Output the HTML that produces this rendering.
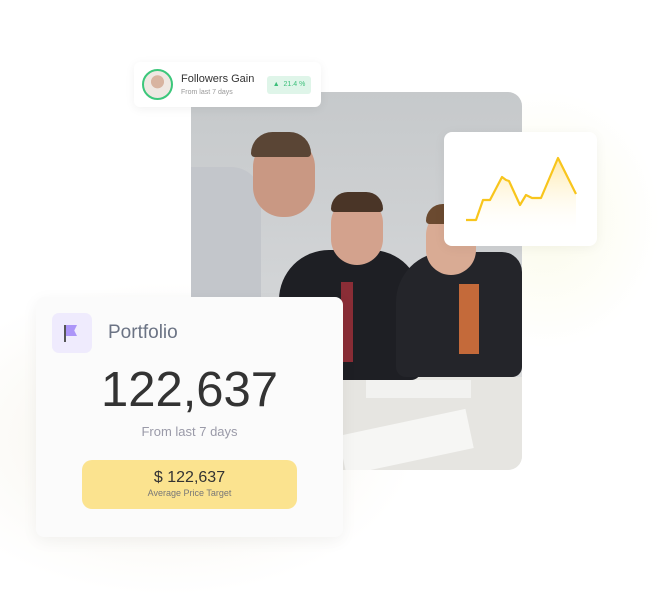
<!DOCTYPE html>
<html><head><style>
body{margin:0;width:661px;height:597px;background:#fff;position:relative;overflow:hidden;font-family:"Liberation Sans",sans-serif}
.abs{position:absolute}
</style></head><body>
<div class="abs" style="left:0;top:280px;width:420px;height:317px;background:radial-gradient(ellipse at 40% 50%,#f6f3ea 0%,#fff 70%)"></div>
<div class="abs" style="left:430px;top:90px;width:231px;height:260px;background:radial-gradient(ellipse at 50% 50%,#fbfbea 0%,#fff 70%)"></div>
<!-- photo -->
<div class="abs" style="left:191px;top:92px;width:331px;height:378px;border-radius:14px;overflow:hidden;background:linear-gradient(#c6c9cb,#d4d6d8 60%,#e4e4e2)">
 <div class="abs" style="left:0;top:285px;width:331px;height:93px;background:#e6e5e1"></div>
 <div class="abs" style="left:0;top:75px;width:70px;height:210px;background:#c3c6cb;border-radius:0 30px 0 0"></div>
 <div class="abs" style="left:62px;top:45px;width:62px;height:80px;border-radius:30px;background:#c99883"></div>
 <div class="abs" style="left:60px;top:40px;width:60px;height:25px;border-radius:30px 30px 5px 5px;background:#5a4535"></div>
 <div class="abs" style="left:88px;top:158px;width:142px;height:130px;border-radius:50px 50px 10px 10px;background:#1e1f24"></div>
 <div class="abs" style="left:140px;top:105px;width:52px;height:68px;border-radius:26px;background:#d3a28d"></div>
 <div class="abs" style="left:140px;top:100px;width:52px;height:20px;border-radius:26px 26px 5px 5px;background:#4a3527"></div>
 <div class="abs" style="left:205px;top:160px;width:126px;height:125px;border-radius:50px 20px 10px 10px;background:#24252a"></div>
 <div class="abs" style="left:235px;top:118px;width:50px;height:65px;border-radius:25px;background:#d9ab94"></div>
 <div class="abs" style="left:235px;top:112px;width:48px;height:20px;border-radius:25px 25px 5px 5px;background:#6b4a30"></div>
 <div class="abs" style="left:268px;top:192px;width:20px;height:70px;background:#c46a3a"></div>
 <div class="abs" style="left:150px;top:190px;width:12px;height:80px;background:#8a2d36"></div>
 <div class="abs" style="left:150px;top:330px;width:130px;height:40px;background:#f6f6f4;transform:rotate(-12deg)"></div>
 <div class="abs" style="left:175px;top:288px;width:105px;height:18px;background:#f2f2f0"></div>
</div>
<!-- followers card -->
<div class="abs" style="left:134px;top:62px;width:187px;height:45px;background:#fff;border-radius:6px;box-shadow:0 2px 10px rgba(0,0,0,.06)">
 <div class="abs" style="left:8px;top:7px;width:27px;height:27px;border:2px solid #3cc77b;border-radius:50%;background:radial-gradient(circle at 50% 40%,#d8b4a0 0 30%,#efe8e2 32%)"></div>
 <div class="abs" style="left:47px;top:11px;font-size:11px;color:#333">Followers Gain</div>
 <div class="abs" style="left:47px;top:27px;font-size:7px;color:#999">From last 7 days</div>
 <div class="abs" style="left:133px;top:14px;width:44px;height:18px;background:#dff5e9;border-radius:3px;color:#3cbf7a;font-size:7px;line-height:18px;text-align:center">▲&nbsp;&nbsp;21.4 %</div>
</div>
<!-- chart card -->
<div class="abs" style="left:444px;top:132px;width:153px;height:114px;background:#fff;border-radius:8px;box-shadow:0 2px 12px rgba(0,0,0,.05)"></div>
<svg class="abs" style="left:0;top:0" width="661" height="597">
 <defs><linearGradient id="g" x1="0" y1="0" x2="0" y2="1"><stop offset="0" stop-color="#ffe9a8"/><stop offset="1" stop-color="#fff" stop-opacity="0"/></linearGradient></defs>
 <path d="M466 220L476 220L483 200L490 200L502 177L506 180L509 181L520 205L526 195L528 196L532 198L541 198L558 158L576 194L576 235L466 235Z" fill="url(#g)"/>
 <path d="M466 220L476 220L483 200L490 200L502 177L506 180L509 181L520 205L526 195L528 196L532 198L541 198L558 158L576 194" fill="none" stroke="#f8c51c" stroke-width="2.2" stroke-linejoin="round"/>
</svg>
<!-- portfolio -->
<div class="abs" style="left:36px;top:297px;width:307px;height:240px;background:#fbfbfb;border-radius:8px;box-shadow:0 4px 16px rgba(0,0,0,.05)">
 <div class="abs" style="left:16px;top:16px;width:40px;height:40px;border-radius:7px;background:#efebfd">
  <div class="abs" style="left:12px;top:12px;width:2px;height:17px;background:#555"></div>
  <div class="abs" style="left:14px;top:12px;width:11px;height:11px;background:#ac95f8;clip-path:polygon(0 0,100% 0,75% 50%,100% 100%,0 100%)"></div>
 </div>
 <div class="abs" style="left:72px;top:25px;font-size:19px;color:#6b7384">Portfolio</div>
 <div class="abs" style="left:0;top:65px;width:307px;text-align:center;font-size:49px;color:#333">122,637</div>
 <div class="abs" style="left:0;top:127px;width:307px;text-align:center;font-size:13px;color:#9a9aa8">From last 7 days</div>
 <div class="abs" style="left:46px;top:163px;width:215px;height:49px;background:#fbe38f;border-radius:10px;text-align:center">
  <div style="font-size:16px;color:#333;margin-top:9px">$ 122,637</div>
  <div style="font-size:9px;color:#777;margin-top:1px">Average Price Target</div>
 </div>
</div>
</body></html>
